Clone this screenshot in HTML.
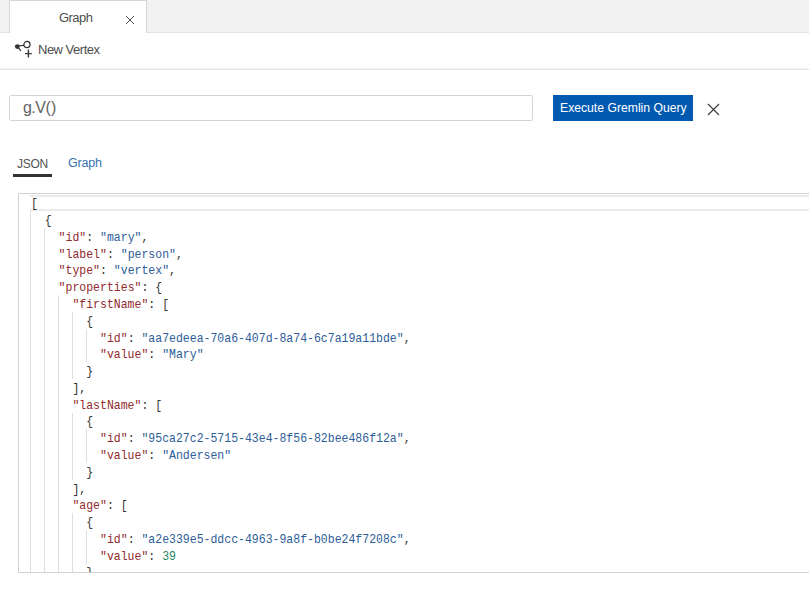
<!DOCTYPE html>
<html><head><meta charset="utf-8">
<style>
html,body{margin:0;padding:0;width:809px;height:592px;overflow:hidden;background:#fff;font-family:"Liberation Sans",sans-serif;}
.abs{position:absolute;}
#tabbar{position:absolute;left:0;top:0;width:809px;height:33px;background:#f2f2f2;border-bottom:1px solid #e2e2e2;box-sizing:border-box;}
#tab{position:absolute;left:9px;top:0;width:138px;height:33px;background:#fff;border:1px solid #d6d6d6;border-bottom:none;box-sizing:border-box;}
#tabtxt{position:absolute;left:59px;top:10.4px;font-size:13px;color:#4d4d4d;line-height:16px;letter-spacing:-0.55px;}
#tabx{position:absolute;left:125px;top:15px;}
#toolbar{position:absolute;left:0;top:68px;width:809px;height:1px;background:#f3f3f3;border-bottom:1px solid #e5e5e5;}
#nvtxt{position:absolute;left:38px;top:41.8px;font-size:13px;color:#4d4d4d;line-height:16px;letter-spacing:-0.5px;}
#nvicon{position:absolute;left:13px;top:39px;}
#inp{position:absolute;left:9px;top:95px;width:524px;height:26px;border:1px solid #d4d4d4;border-radius:2px;box-sizing:border-box;}
#inptxt{position:absolute;left:23px;top:98.6px;font-size:16px;color:#636363;line-height:18px;letter-spacing:-0.55px;}
#btn{position:absolute;left:553px;top:95px;width:140px;height:26px;background:#0259b0;}
#btntxt{position:absolute;left:560px;top:101px;font-size:12.2px;color:#fff;line-height:15px;letter-spacing:0px;white-space:nowrap;}
#bx{position:absolute;left:707px;top:102.6px;}
#json{position:absolute;left:17px;top:157px;font-size:12px;color:#555;line-height:14px;letter-spacing:-0.3px;}
#graph{position:absolute;left:68px;top:156px;font-size:12.5px;color:#3871b0;line-height:14px;letter-spacing:-0.2px;}
#uline{position:absolute;left:13px;top:174px;width:39px;height:3px;background:#333;}
#editor{position:absolute;left:18px;top:193px;width:800px;height:380px;border:1px solid #d3d3d3;box-sizing:border-box;}
#cur{position:absolute;left:30.3px;top:194.5px;width:790px;height:16.78px;border-top:2px solid #ebebeb;border-bottom:2px solid #ebebeb;box-sizing:border-box;}
.g{position:absolute;width:1px;background:#dedede;}
.ln{position:absolute;left:30.3px;transform:scaleX(0.8846);transform-origin:0 0;height:16.78px;line-height:16.78px;font-family:"Liberation Mono",monospace;font-size:13px;white-space:pre;color:#333;}
.k{color:#902b2e;}
.s{color:#2e5d98;}
.n{color:#1f8461;}
#clip{position:absolute;left:19px;top:194px;width:790px;height:378px;overflow:hidden;}
#inner{position:absolute;left:-19px;top:-194px;width:809px;height:592px;}
</style></head><body>
<div id="tabbar"></div>
<div id="tab"></div>
<div id="tabtxt">Graph</div>
<svg id="tabx" width="10" height="10" viewBox="0 0 10 10"><path d="M1 1L9 9M9 1L1 9" stroke="#444" stroke-width="0.95"/></svg>
<div id="toolbar"></div>
<svg id="nvicon" width="22" height="22" viewBox="0 0 22 22">
<circle cx="4.3" cy="7.6" r="2.4" fill="#333"/>
<path d="M4.3 7.0L11 6.4M4.3 7.3L7.9 11.8" stroke="#333" stroke-width="1.2" fill="none"/>
<circle cx="14" cy="5.5" r="3.1" stroke="#333" stroke-width="1.2" fill="none"/>
<path d="M15.4 10.6V18.6M12 14.6H18.8" stroke="#3a3a3a" stroke-width="1.45"/>
</svg>
<div id="nvtxt">New Vertex</div>
<div id="inp"></div>
<div id="inptxt">g.V<span style="letter-spacing:0.4px">(</span>)</div>
<div id="btn"></div>
<div id="btntxt">Execute Gremlin Query</div>
<svg id="bx" width="13" height="13" viewBox="0 0 13 13"><path d="M1 1L12 12M12 1L1 12" stroke="#3d3d3d" stroke-width="1.15"/></svg>
<div id="json">JSON</div>
<div id="graph">Graph</div>
<div id="uline"></div>
<div id="editor"></div>
<div id="clip"><div id="inner">
<div id="cur"></div>
<div class="g" style="left:30.30px;top:211.28px;height:385.94px"></div>
<div class="g" style="left:44.10px;top:228.06px;height:369.16px"></div>
<div class="g" style="left:57.90px;top:295.18px;height:302.04px"></div>
<div class="g" style="left:71.71px;top:311.96px;height:67.12px"></div>
<div class="g" style="left:71.71px;top:412.64px;height:67.12px"></div>
<div class="g" style="left:71.71px;top:513.32px;height:67.12px"></div>
<div class="g" style="left:85.51px;top:328.74px;height:33.56px"></div>
<div class="g" style="left:85.51px;top:429.42px;height:33.56px"></div>
<div class="g" style="left:85.51px;top:530.10px;height:33.56px"></div>

<div class="ln" style="top:196.30px;left:30.60px">[</div>
<div class="ln" style="top:213.08px;left:30.60px">  {</div>
<div class="ln" style="top:229.86px;left:30.60px">    <span class="k">&quot;id&quot;</span>: <span class="s">&quot;mary&quot;</span>,</div>
<div class="ln" style="top:246.64px;left:30.60px">    <span class="k">&quot;label&quot;</span>: <span class="s">&quot;person&quot;</span>,</div>
<div class="ln" style="top:263.42px;left:30.60px">    <span class="k">&quot;type&quot;</span>: <span class="s">&quot;vertex&quot;</span>,</div>
<div class="ln" style="top:280.20px;left:30.60px">    <span class="k">&quot;properties&quot;</span>: {</div>
<div class="ln" style="top:296.98px;left:30.60px">      <span class="k">&quot;firstName&quot;</span>: [</div>
<div class="ln" style="top:313.76px;left:30.60px">        {</div>
<div class="ln" style="top:330.54px;left:30.60px">          <span class="k">&quot;id&quot;</span>: <span class="s">&quot;aa7edeea-70a6-407d-8a74-6c7a19a11bde&quot;</span>,</div>
<div class="ln" style="top:347.32px;left:30.60px">          <span class="k">&quot;value&quot;</span>: <span class="s">&quot;Mary&quot;</span></div>
<div class="ln" style="top:364.10px;left:30.60px">        }</div>
<div class="ln" style="top:380.88px;left:30.60px">      ],</div>
<div class="ln" style="top:397.66px;left:30.60px">      <span class="k">&quot;lastName&quot;</span>: [</div>
<div class="ln" style="top:414.44px;left:30.60px">        {</div>
<div class="ln" style="top:431.22px;left:30.60px">          <span class="k">&quot;id&quot;</span>: <span class="s">&quot;95ca27c2-5715-43e4-8f56-82bee486f12a&quot;</span>,</div>
<div class="ln" style="top:448.00px;left:30.60px">          <span class="k">&quot;value&quot;</span>: <span class="s">&quot;Andersen&quot;</span></div>
<div class="ln" style="top:464.78px;left:30.60px">        }</div>
<div class="ln" style="top:481.56px;left:30.60px">      ],</div>
<div class="ln" style="top:498.34px;left:30.60px">      <span class="k">&quot;age&quot;</span>: [</div>
<div class="ln" style="top:515.12px;left:30.60px">        {</div>
<div class="ln" style="top:531.90px;left:30.60px">          <span class="k">&quot;id&quot;</span>: <span class="s">&quot;a2e339e5-ddcc-4963-9a8f-b0be24f7208c&quot;</span>,</div>
<div class="ln" style="top:548.68px;left:30.60px">          <span class="k">&quot;value&quot;</span>: <span class="n">39</span></div>
<div class="ln" style="top:565.46px;left:30.60px">        }</div>

</div></div>
</body></html>
